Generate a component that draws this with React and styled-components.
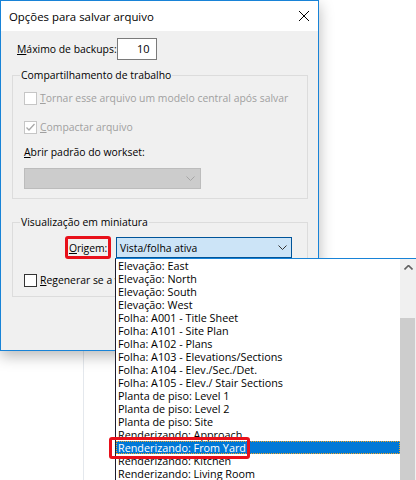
import React from "react";
import styled, { createGlobalStyle } from "styled-components";

const GlobalStyle = createGlobalStyle`
  body {
    margin: 0;
    background: #ffffff;
    font-family: "Open Sans", "Liberation Sans", sans-serif;
    font-size: 10.4px;
    color: #000000;
  }
`;

const items = [
  "Elevação: East",
  "Elevação: North",
  "Elevação: South",
  "Elevação: West",
  "Folha: A001 - Title Sheet",
  "Folha: A101 - Site Plan",
  "Folha: A102 - Plans",
  "Folha: A103 - Elevations/Sections",
  "Folha: A104 - Elev./Sec./Det.",
  "Folha: A105 - Elev./ Stair Sections",
  "Planta de piso: Level 1",
  "Planta de piso: Level 2",
  "Planta de piso: Site",
  "Renderizando: Approach",
  "Renderizando: From Yard",
  "Renderizando: Kitchen",
  "Renderizando: Living Room",
  "Renderizando: Patio",
];

const SELECTED = "Renderizando: From Yard";

function Chevron({ color, up }) {
  return (
    <svg width="9" height="5" viewBox="0 0 9 5">
      <path
        d={up ? "M0.5 4.5 L4.5 0.5 L8.5 4.5" : "M0.5 0.5 L4.5 4.5 L8.5 0.5"}
        fill="none"
        stroke={color}
        strokeWidth={up ? 1.6 : 1}
      />
    </svg>
  );
}

function CheckBox({ checked, disabled }) {
  return (
    <Box disabled={disabled}>
      {checked && (
        <svg width="11" height="11" viewBox="0 0 11 11">
          <path d="M1.5 5.5 L4 8 L9.5 2" fill="none" stroke="#a8a8a8" strokeWidth="1.3" />
        </svg>
      )}
    </Box>
  );
}

export default function App() {
  return (
    <Page>
      <GlobalStyle />
      <Backdrop />

      <Dialog>
        <TitleBar>
          <Title>Opções para salvar arquivo</Title>
          <CloseButton>
            <svg width="10" height="10" viewBox="0 0 10 10">
              <path d="M0 0 L10 10 M10 0 L0 10" stroke="#000" strokeWidth="1" />
            </svg>
          </CloseButton>
        </TitleBar>

        <Body>
          <BackupsRow>
            <Label><u>M</u>áximo de backups:</Label>
            <NumberBox>10</NumberBox>
          </BackupsRow>

          <Group>
            <Legend>Compartilhamento de trabalho</Legend>
            <CheckRow top={7}>
              <CheckBox disabled />
              <CheckText disabled><u>T</u>ornar esse arquivo um modelo central após salvar</CheckText>
            </CheckRow>
            <CheckRow top={13}>
              <CheckBox checked disabled />
              <CheckText disabled><u>C</u>ompactar arquivo</CheckText>
            </CheckRow>
            <FieldLabel><u>A</u>brir padrão do workset:</FieldLabel>
            <DisabledCombo>
              <Chevron color="#a6a6a6" />
            </DisabledCombo>
          </Group>

          <Group second>
            <Legend>Visualização em miniatura</Legend>
            <OriginRow>
              <Highlight><u>O</u>rigem:</Highlight>
              <ActiveCombo>
                <span>Vista/folha ativa</span>
                <Chevron color="#333" />
              </ActiveCombo>
            </OriginRow>
            <CheckRow top={13}>
              <CheckBox />
              <CheckText><u>R</u>egenerar se a visualização estiver desatualizada</CheckText>
            </CheckRow>
          </Group>
        </Body>
      </Dialog>

      <DropList>
        <Items>
          {items.map((item) => (
            <Item key={item} selected={item === SELECTED}>
              {item}
            </Item>
          ))}
        </Items>
        <ScrollBar>
          <ScrollArrow>
            <Chevron color="#606060" up />
          </ScrollArrow>
          <ScrollTrack>
            <Thumb />
          </ScrollTrack>
        </ScrollBar>
      </DropList>

      <Annotation />
    </Page>
  );
}

const Page = styled.div`
  position: relative;
  width: 416px;
  height: 480px;
  overflow: hidden;
  background: #ffffff;
  display: flex;
`;

const Backdrop = styled.div`
  width: 83px;
  height: 100%;
  border-right: 1px solid #e4e8ed;
`;

const Dialog = styled.div`
  position: absolute;
  left: 0;
  top: 0;
  width: 319px;
  height: 351px;
  box-sizing: border-box;
  border: 1px solid #1883d7;
  background: #f0f0f0;
  box-shadow: 0 5px 14px rgba(0, 0, 0, 0.28);
  display: flex;
  flex-direction: column;
`;

const TitleBar = styled.div`
  height: 30px;
  background: #ffffff;
  display: flex;
  align-items: center;
  justify-content: space-between;
  padding-left: 8px;
`;

const Title = styled.span`
  font-size: 11.4px;
`;

const CloseButton = styled.div`
  width: 28px;
  height: 30px;
  display: flex;
  align-items: center;
  justify-content: center;
`;

const Body = styled.div`
  padding: 0 10px 0 11px;
  display: flex;
  flex-direction: column;
`;

const BackupsRow = styled.div`
  display: flex;
  align-items: center;
  margin-top: 7px;
  padding-left: 5px;
  gap: 0;
`;

const Label = styled.span`
  line-height: 16px;
`;

const NumberBox = styled.div`
  width: 40px;
  height: 22px;
  box-sizing: border-box;
  border: 1px solid #7a7a7a;
  background: #ffffff;
  text-align: right;
  padding-right: 6px;
  line-height: 20px;
  font-size: 11px;
`;

const Group = styled.fieldset`
  margin: ${(p) => (p.second ? "15px" : "7px")} 0 0 0;
  padding: 0 11px ${(p) => (p.second ? "8px" : "9px")} 11px;
  border: 1px solid #dcdcdc;
  display: flex;
  flex-direction: column;
  min-width: 0;
`;

const Legend = styled.legend`
  padding: 0 1px;
  margin-left: -4px;
  line-height: 16px;
`;

const CheckRow = styled.div`
  display: flex;
  align-items: center;
  gap: 3px;
  height: 16px;
  margin-top: ${(p) => p.top}px;
  white-space: nowrap;
`;

const Box = styled.div`
  width: 13px;
  height: 13px;
  box-sizing: border-box;
  border: 1px solid ${(p) => (p.disabled ? "#c6c6c6" : "#333333")};
  background: #ffffff;
  display: flex;
  align-items: center;
  justify-content: center;
  flex-shrink: 0;
`;

const CheckText = styled.span`
  color: ${(p) => (p.disabled ? "#a0a0a0" : "#000000")};
`;

const FieldLabel = styled.span`
  margin-top: 9px;
  line-height: 16px;
`;

const DisabledCombo = styled.div`
  margin-top: 8px;
  width: 177px;
  height: 21px;
  box-sizing: border-box;
  border: 1px solid #bcbcbc;
  background: #cccccc;
  display: flex;
  align-items: center;
  justify-content: flex-end;
  padding-right: 5px;
`;

const OriginRow = styled.div`
  display: flex;
  align-items: center;
  margin-top: 6px;
  margin-left: 41px;
  gap: 5px;
`;

const Highlight = styled.span`
  border: 3px solid #e8101a;
  border-radius: 3px;
  padding: 0;
  width: 46px;
  height: 23px;
  box-sizing: border-box;
  display: flex;
  align-items: center;
  justify-content: center;
  white-space: nowrap;
  letter-spacing: -0.1px;
`;

const ActiveCombo = styled.div`
  width: 176px;
  height: 21px;
  box-sizing: border-box;
  border: 1px solid #005499;
  background: #cce4f7;
  display: flex;
  align-items: center;
  justify-content: space-between;
  padding: 0 4px 0 3px;
`;

const DropList = styled.div`
  position: absolute;
  left: 115px;
  top: 258px;
  width: 302px;
  height: 240px;
  box-sizing: border-box;
  border-top: 1px solid #1883d7;
  border-left: 1px solid #1c1c2c;
  background: #ffffff;
  display: flex;
`;

const Items = styled.div`
  width: 284px;
  display: flex;
  flex-direction: column;
`;

const Item = styled.div`
  height: 13px;
  line-height: 13px;
  padding-left: 2px;
  font-size: 10.8px;
  white-space: nowrap;
  box-sizing: border-box;
  color: ${(p) => (p.selected ? "#ffffff" : "#000000")};
  background: ${(p) => (p.selected ? "#0078d7" : "transparent")};
  outline: ${(p) => (p.selected ? "1px dotted #f5a623" : "none")};
  outline-offset: -1px;
`;

const ScrollBar = styled.div`
  width: 17px;
  background: #f0f0f0;
  display: flex;
  flex-direction: column;
`;

const ScrollArrow = styled.div`
  height: 17px;
  display: flex;
  align-items: center;
  justify-content: center;
`;

const ScrollTrack = styled.div`
  flex: 1;
  padding-top: 42px;
  display: flex;
`;

const Thumb = styled.div`
  flex: 1;
  margin-right: 2px;
  background: #cdcdcd;
`;

const Annotation = styled.div`
  position: absolute;
  left: 109px;
  top: 437px;
  width: 141px;
  height: 22px;
  box-sizing: border-box;
  border: 3px solid #e8101a;
  border-radius: 3px;
`;
